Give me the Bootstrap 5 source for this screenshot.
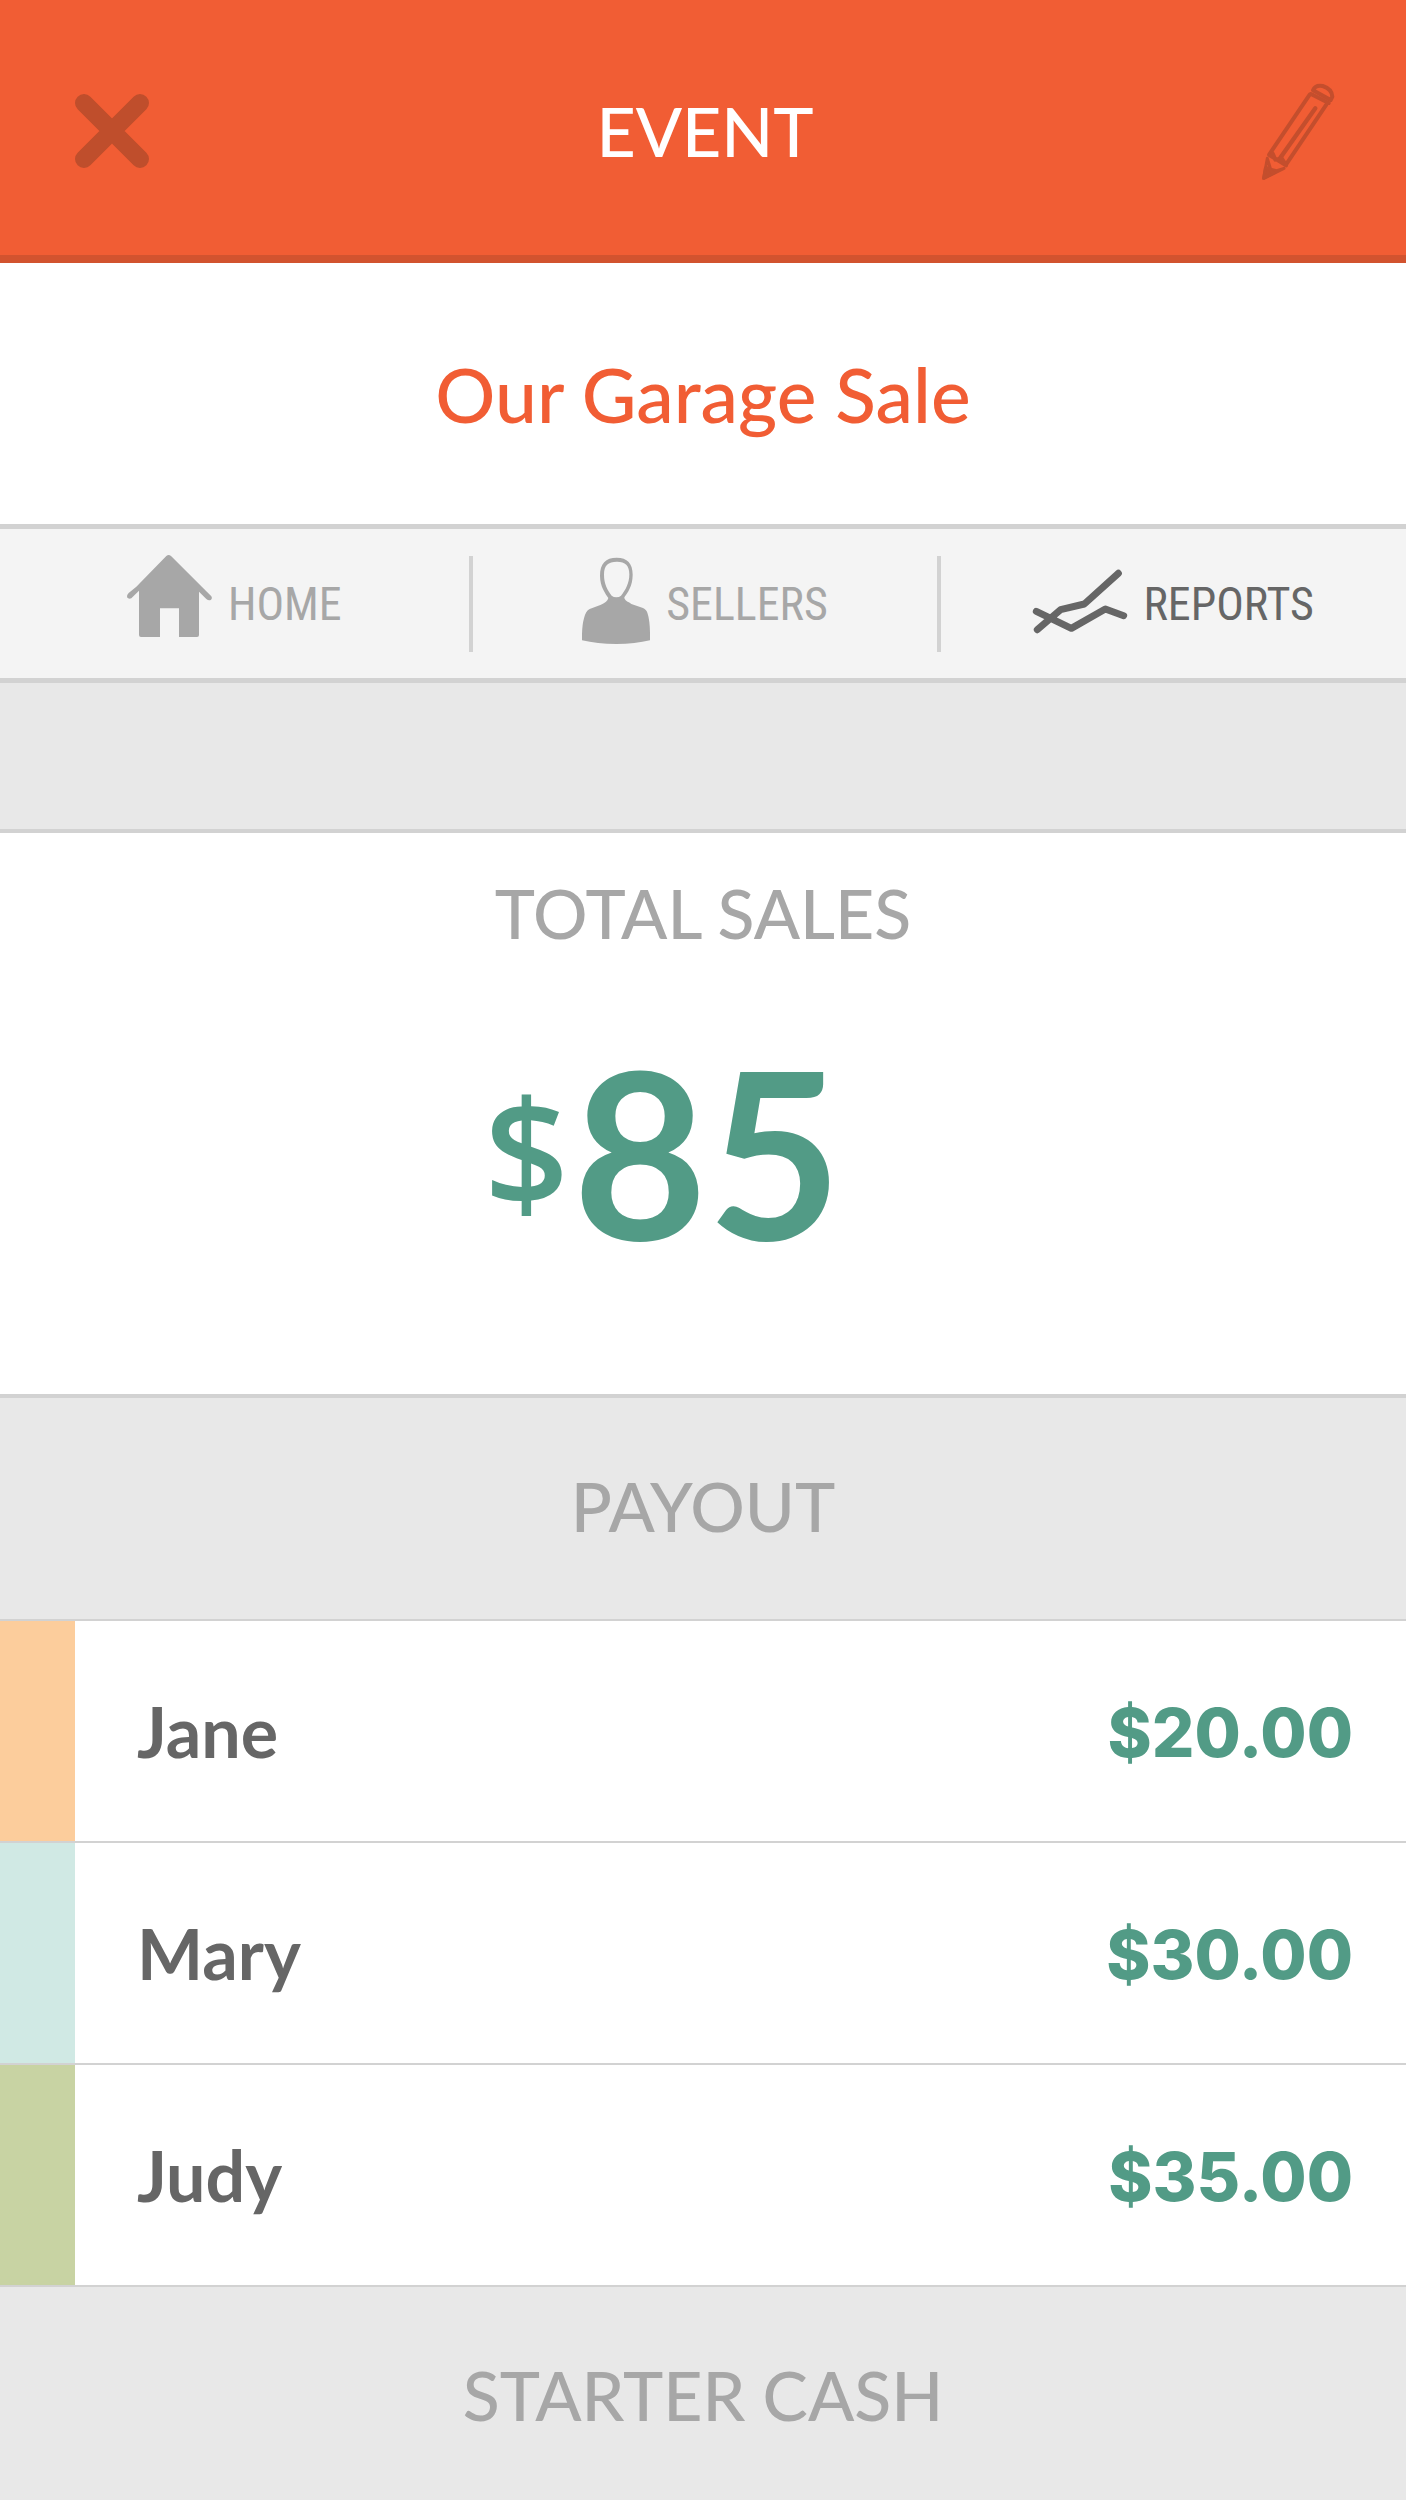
<!DOCTYPE html>
<html lang="en">
<head>
<meta charset="utf-8">
<meta name="viewport" content="width=device-width, initial-scale=1">
<title>Event reports</title>
<link href="https://cdn.jsdelivr.net/npm/bootstrap@5.3.0/dist/css/bootstrap.min.css" rel="stylesheet">
<style>
  :root { --orange: #f15d34; --green: #529b86; --line: #d2d2d2; --muted: #a7a7a7; --dark: #666; --band: #e8e8e8; }
  body { font-family: Lato, "Open Sans", sans-serif; background: var(--band); color: var(--dark); }
  .topbar { background: var(--orange); border-bottom: 8px solid #d2532f; padding: 83px 68px 76px 72px; }
  .topbar .btn { width: 80px; line-height: 0; }
  .heading { font-size: 68px; line-height: 82px; font-weight: 500; }
  .topbar .heading { line-height: 96px; }
  .sale-name { font-size: 75px; line-height: 91px; font-weight: 500; color: var(--orange); padding: 86px 0 84px; }
  .tabs { background: #f4f4f4; border-top: 5px solid var(--line); border-bottom: 5px solid var(--line); padding: 27px 0 26px; }
  .tabs .nav-link { display: flex; align-items: center; justify-content: center; gap: 16px; padding: 0; color: var(--muted);
    font: 400 46px/96px "Roboto Condensed", Roboto, sans-serif; }
  .tabs .nav-item + .nav-item { border-left: 4px solid var(--line); }
  .tabs .nav-link.active { color: var(--dark); }
  .spacer { height: 146px; }
  .total { border-top: 4px solid var(--line); border-bottom: 4px solid var(--line); padding: 39px 0 128px; }
  .total .heading, .band { color: var(--muted); }
  .amount { color: var(--green); font-weight: 700; font-size: 232px; line-height: 232px; margin-top: 80px; padding-right: 80px; gap: 4px; }
  .amount .currency { font-family: "Open Sans", sans-serif; font-weight: 600; font-size: 148px; }
  .band { background: var(--band); padding: 67px 0 72px; }
  .band-ruled { border-top: 2px solid var(--line); }
  .payee { border-top: 2px solid var(--line); height: 222px; }
  .swatch { width: 75px; }
  .swatch-peach { background: #fccd9c; }
  .swatch-mint { background: #d0e9e4; }
  .swatch-olive { background: #c8d3a3; }
  .payee-name { font-size: 70px; font-weight: 700; padding-left: 62px; }
  .payee-sum { font-family: Inter, sans-serif; font-size: 67px; font-weight: 800; color: var(--green); padding: 4px 53px 0 0; }
</style>
</head>
<body>
<header class="topbar d-flex align-items-center justify-content-between">
  <button type="button" class="btn p-0 border-0" aria-label="Close">
    <svg width="80" height="80" viewBox="0 0 80 80" fill="none" stroke="#bf4e2c" stroke-width="18" stroke-linecap="round"><path d="M12 12L68 68M68 12L12 68"/></svg>
  </button>
  <h1 class="heading text-white m-0">EVENT</h1>
  <button type="button" class="btn p-0 border-0" aria-label="Edit">
    <svg width="74" height="96" viewBox="95 66 222 288" overflow="visible" fill="none" stroke="#c44e2d" stroke-width="12" stroke-linejoin="round" stroke-linecap="round">
      <path d="M251 88Q258 71 280 75Q308 84 309 107L304 117Z"/>
      <path d="M245 99L298 126M241 101L120 280M291 131L170 311"/>
      <path d="M258 142L153 290" stroke-width="13"/>
      <path d="M120 282L170 313M130 278L138 296L157 292L169 311"/>
      <path d="M114 292L103 352L164 322M114 292L124 325L142 329L164 322" stroke-width="9"/>
      <path d="M108 322L103 352L134 336Q121 330 120 320Z" fill="#c44e2d" stroke-width="9"/>
    </svg>
  </button>
</header>

<main>
  <h2 class="sale-name bg-white text-center m-0">Our Garage Sale</h2>

  <nav class="tabs" aria-label="Event sections">
    <ul class="nav nav-fill row g-0">
      <li class="nav-item col-4"><a class="nav-link" href="#home">
        <svg width="85" height="96" viewBox="84 138 255 288" overflow="visible" fill="currentColor">
          <path d="M202 138Q209 132 216 138L337 259Q341 266 335 270Q328 272 322 267L300 245V375Q300 381 294 381H240V295H183V381H126Q120 381 120 375V242L97 265Q89 269 84 262Q83 254 89 249L112 230Z"/>
        </svg>HOME</a></li>
      <li class="nav-item col-4"><a class="nav-link" href="#sellers">
        <svg width="68" height="96" viewBox="75 138 204 288" fill="currentColor">
          <path fill-rule="evenodd" d="M179 143C211 143 227 160 227 194C227 228 212 248 202 262C202 272 213 275 223 282L258 294Q269 299 272 311Q280 335 279 391Q235 402 178 402Q120 402 75 391Q74 350 81 325Q86 303 98 297L132 284Q151 277 154 264C145 250 129 230 129 197C129 160 146 143 179 143ZM180 155C153 155 141 166 141 194C141 220 151 240 164 257Q170 262 178 262Q187 262 192 257C206 240 217 219 217 193C217 166 205 155 180 155Z"/>
        </svg>SELLERS</a></li>
      <li class="nav-item col-4"><a class="nav-link active" aria-current="page" href="#reports">
        <svg width="94" height="96" viewBox="93 138 282 288" overflow="visible" fill="none" stroke="currentColor" stroke-width="21" stroke-linecap="round" stroke-linejoin="round">
          <path d="M106 359L176 299L247 282L349 190M103 304L208 355L310 297L365 317"/>
        </svg>REPORTS</a></li>
    </ul>
  </nav>

  <div class="spacer"></div>

  <section class="total bg-white text-center">
    <h3 class="heading m-0">TOTAL SALES</h3>
    <div class="amount d-flex align-items-center justify-content-center"><span class="currency">$</span><span>85</span></div>
  </section>

  <section>
    <h3 class="band heading text-center m-0">PAYOUT</h3>
    <ul class="list-unstyled m-0">
      <li class="payee bg-white d-flex align-items-center"><span class="swatch swatch-peach align-self-stretch"></span><span class="payee-name">Jane</span><span class="payee-sum ms-auto">$20.00</span></li>
      <li class="payee bg-white d-flex align-items-center"><span class="swatch swatch-mint align-self-stretch"></span><span class="payee-name">Mary</span><span class="payee-sum ms-auto">$30.00</span></li>
      <li class="payee bg-white d-flex align-items-center"><span class="swatch swatch-olive align-self-stretch"></span><span class="payee-name">Judy</span><span class="payee-sum ms-auto">$35.00</span></li>
    </ul>
  </section>

  <section>
    <h3 class="band band-ruled heading text-center m-0">STARTER CASH</h3>
  </section>
</main>
<script src="https://cdn.jsdelivr.net/npm/bootstrap@5.3.0/dist/js/bootstrap.bundle.min.js"></script>
</body>
</html>
